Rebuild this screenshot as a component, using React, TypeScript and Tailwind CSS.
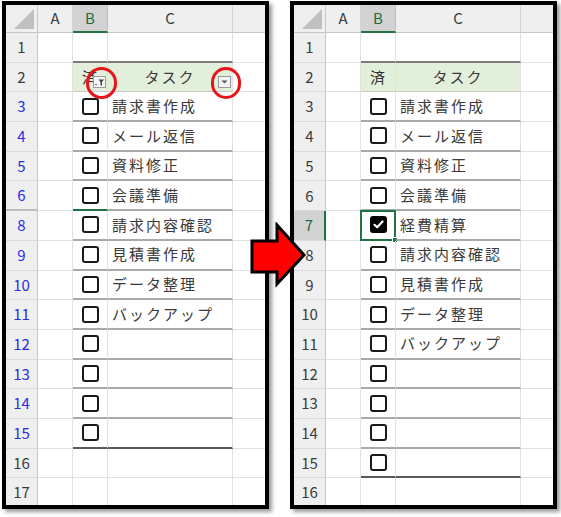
import React from "react";

type Kind = "top" | "hdr" | "body" | "last" | null;

type Row = {
  n: string;
  blue?: boolean;
  b?: "box" | "check" | "hdr" | null;
  c?: string;
  kind?: Kind;
  sel?: boolean;
  greenUnder?: boolean;
  filter?: boolean;
};

const leftRows: Row[] = [
  { n: "1", kind: "top" },
  { n: "2", b: "hdr", c: "タスク", kind: "hdr", filter: true },
  { n: "3", blue: true, b: "box", c: "請求書作成", kind: "body" },
  { n: "4", blue: true, b: "box", c: "メール返信", kind: "body" },
  { n: "5", blue: true, b: "box", c: "資料修正", kind: "body" },
  { n: "6", blue: true, b: "box", c: "会議準備", kind: "body", greenUnder: true },
  { n: "8", blue: true, b: "box", c: "請求内容確認", kind: "body" },
  { n: "9", blue: true, b: "box", c: "見積書作成", kind: "body" },
  { n: "10", blue: true, b: "box", c: "データ整理", kind: "body" },
  { n: "11", blue: true, b: "box", c: "バックアップ", kind: "body" },
  { n: "12", blue: true, b: "box", kind: "body" },
  { n: "13", blue: true, b: "box", kind: "body" },
  { n: "14", blue: true, b: "box", kind: "body" },
  { n: "15", blue: true, b: "box", kind: "last" },
  { n: "16" },
  { n: "17" },
];

const rightRows: Row[] = [
  { n: "1", kind: "top" },
  { n: "2", b: "hdr", c: "タスク", kind: "hdr" },
  { n: "3", b: "box", c: "請求書作成", kind: "body" },
  { n: "4", b: "box", c: "メール返信", kind: "body" },
  { n: "5", b: "box", c: "資料修正", kind: "body" },
  { n: "6", b: "box", c: "会議準備", kind: "body" },
  { n: "7", b: "check", c: "経費精算", kind: "body", sel: true },
  { n: "8", b: "box", c: "請求内容確認", kind: "body" },
  { n: "9", b: "box", c: "見積書作成", kind: "body" },
  { n: "10", b: "box", c: "データ整理", kind: "body" },
  { n: "11", b: "box", c: "バックアップ", kind: "body" },
  { n: "12", b: "box", kind: "body" },
  { n: "13", b: "box", kind: "body" },
  { n: "14", b: "box", kind: "body" },
  { n: "15", b: "box", kind: "last" },
  { n: "16" },
];

function tableBorder(kind: Kind) {
  if (kind === "top") return "border-b-2 border-b-[#7a7a7a]";
  if (kind === "hdr") return "border-b border-b-[#c9c9c9] bg-[#e2efda]";
  if (kind === "body") return "border-b-2 border-b-[#a9a9a9]";
  if (kind === "last") return "border-b-2 border-b-[#5a5a5a]";
  return "border-b border-b-[#e1e1e1]";
}

function Box() {
  return <div className="w-[17px] h-[17px] rounded-[3px] border-2 border-[#1a1a1a] bg-white" />;
}

function Checked() {
  return (
    <div className="w-[17px] h-[17px] rounded-[3px] bg-black flex items-center justify-center">
      <svg width="11" height="9" viewBox="0 0 11 9">
        <path d="M1.5 4.8 L4.2 7.3 L9.5 1.5" fill="none" stroke="white" strokeWidth="2.2" strokeLinecap="round" strokeLinejoin="round" />
      </svg>
    </div>
  );
}

function FilterBtn({ funnel }: { funnel?: boolean }) {
  return (
    <div className="absolute right-[1px] bottom-[3px] w-[13px] h-[12px] border border-[#9c9c9c] bg-[#f3f3f3] flex items-center justify-center">
      {funnel ? (
        <svg width="11" height="9" viewBox="0 0 11 9">
          <path d="M1 6 L3 6 L2 7.5 Z" fill="#444" />
          <path d="M4.5 1.5 L10 1.5 L8 4 L8 7.5 L6.5 7.5 L6.5 4 Z" fill="#444" />
        </svg>
      ) : (
        <svg width="7" height="4" viewBox="0 0 7 4">
          <path d="M0.5 0.5 L6.5 0.5 L3.5 3.5 Z" fill="#555" />
        </svg>
      )}
    </div>
  );
}

function SheetRow({ r }: { r: Row }) {
  const cellBorder = tableBorder(r.kind ?? null);
  return (
    <div className="flex h-[29.7px]">
      <div
        className={`w-[32px] shrink-0 flex items-center justify-center text-[15px] ${
          r.sel
            ? "bg-[#d2d2d2] border-r-2 border-r-[#217346] text-[#1e6b41]"
            : "bg-[#efefef] border-r border-r-[#c6c6c6]"
        } ${r.greenUnder ? "border-b-2 border-b-[#bdbdbd]" : "border-b border-b-[#dadada]"} ${
          r.blue ? "text-[#2a2ae8]" : r.sel ? "" : "text-[#3b3b3b]"
        }`}
      >
        {r.n}
      </div>
      <div className="w-[35px] shrink-0 border-r border-r-[#e1e1e1] border-b border-b-[#e1e1e1]" />
      <div
        className={`relative w-[35px] shrink-0 flex items-center border-r border-r-[#e1e1e1] ${
          r.greenUnder ? "border-b-2 border-b-[#217346]" : cellBorder
        } ${r.b === "hdr" ? "justify-start pl-[9px]" : "justify-center"}`}
      >
        {r.b === "box" && <Box />}
        {r.b === "check" && <Checked />}
        {r.b === "hdr" && <span className="text-[15px] text-[#333]">済</span>}
        {r.filter && <FilterBtn funnel />}
        {r.sel && (
          <div className="absolute -left-[1px] -top-[1px] -right-[1px] -bottom-[2px] border-2 border-[#217346]">
            <div className="absolute -right-[4px] -bottom-[4px] w-[6px] h-[6px] bg-[#217346] border border-white" />
          </div>
        )}
      </div>
      <div
        className={`relative w-[125px] shrink-0 flex items-center border-r border-r-[#e1e1e1] ${cellBorder} ${
          r.b === "hdr" ? "justify-center tracking-[2px]" : "pl-[4px] tracking-[2px]"
        } text-[15px] text-[#3a3a3a]`}
      >
        {r.c}
        {r.filter && <FilterBtn />}
      </div>
      <div className="flex-1 border-b border-b-[#e1e1e1]" />
    </div>
  );
}

function Sheet({ rows }: { rows: Row[] }) {
  return (
    <div className="w-[267px] h-[508px] border-4 border-black bg-white overflow-hidden shadow-[3px_3px_4px_rgba(0,0,0,0.4)] shrink-0">
      <div className="flex h-[28px] text-[15px] text-[#3b3b3b]">
        <div className="w-[32px] shrink-0 bg-[#efefef] border-r border-r-[#c6c6c6] border-b border-b-[#c6c6c6] relative">
          <div className="absolute right-[3px] bottom-[3px] w-0 h-0 border-l-[20px] border-l-transparent border-b-[20px] border-b-[#c0c0c0]" />
        </div>
        <div className="w-[35px] shrink-0 bg-[#efefef] border-r border-r-[#d4d4d4] border-b border-b-[#c6c6c6] flex items-center justify-center">A</div>
        <div className="w-[35px] shrink-0 bg-[#d2d2d2] border-r border-r-[#bdbdbd] border-b-2 border-b-[#217346] flex items-center justify-center text-[#1e6b41]">B</div>
        <div className="w-[125px] shrink-0 bg-[#efefef] border-r border-r-[#d4d4d4] border-b border-b-[#c6c6c6] flex items-center justify-center">C</div>
        <div className="flex-1 bg-[#efefef] border-b border-b-[#c6c6c6]" />
      </div>
      {rows.map((r) => (
        <SheetRow key={r.n} r={r} />
      ))}
    </div>
  );
}

export default function App() {
  return (
    <div className="relative w-[561px] h-[517px] bg-white overflow-hidden font-['Noto_Sans_CJK_JP','Noto_Sans',sans-serif]">
      <div className="flex gap-[21px] pl-[2px] pt-[1px]">
        <Sheet rows={leftRows} />
        <Sheet rows={rightRows} />
      </div>

      {/* red circles around the filter buttons */}
      <div className="absolute left-[86px] top-[67px] w-[31px] h-[32px] rounded-full border-[3px] border-[#e8141b]" />
      <div className="absolute left-[211px] top-[67px] w-[30px] h-[32px] rounded-full border-[3px] border-[#e8141b]" />

      {/* arrow */}
      <svg className="absolute left-[248px] top-[222px]" width="62" height="66" viewBox="0 0 62 66">
        <polygon
          points="4,19 29,19 29,3 56,33 29,62 29,50 4,50"
          fill="#ff0000"
          stroke="#000"
          strokeWidth="3"
          strokeLinejoin="miter"
        />
      </svg>
    </div>
  );
}
